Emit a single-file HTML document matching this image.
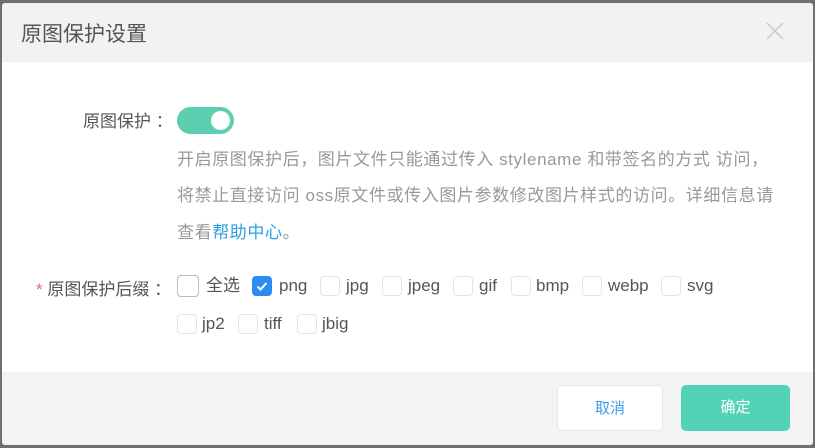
<!DOCTYPE html>
<html><head><meta charset="utf-8"><style>
*{margin:0;padding:0;box-sizing:border-box}
body{width:815px;height:448px;overflow:hidden;background:#6f6f6f;font-family:"Liberation Sans","Noto Sans CJK SC",sans-serif;position:relative}
.dlg{position:absolute;left:2px;top:3px;width:811px;height:442px;background:#fff;border-radius:3px;overflow:hidden}
.hd{position:absolute;left:0;top:0;width:100%;height:59px;background:#f2f2f2}
.hd .t{position:absolute;left:19px;top:15px;font-size:21px;color:#555}
.ft{position:absolute;left:0;top:369px;width:100%;height:73px;background:#f3f3f3}
.a{position:absolute;white-space:nowrap}
.lbl{font-size:17px;color:#555}
.desc{font-size:17px;color:#999;letter-spacing:0.6px}
.cb{position:absolute;width:20px;height:20px;border:1px solid #e4e4e4;border-radius:4px;background:#fff}
.ct{position:absolute;font-size:17px;color:#555;line-height:20px}
.btn{position:absolute;top:382px;height:46px;border-radius:5px;font-size:15px;text-align:center;line-height:46px}
</style></head><body>
<div class="dlg">
<div class="hd"><div class="t">原图保护设置</div>
<svg class="a" style="left:764px;top:19px" width="18" height="18" viewBox="0 0 18 18"><path d="M1 1L17 17M17 1L1 17" stroke="#c4cad2" stroke-width="1.5"/></svg></div>
<div class="a lbl" style="left:81px;top:104px">原图保护 ：</div>
<div class="a" style="left:175px;top:104px;width:57px;height:27px;border-radius:14px;background:#5ccfb0"><div style="position:absolute;right:4px;top:4px;width:19px;height:19px;border-radius:50%;background:#fff"></div></div>
<div class="a desc" style="left:175px;top:142px">开启原图保护后，图片文件只能通过传入 stylename 和带签名的方式 访问，</div>
<div class="a desc" style="left:175px;top:178px">将禁止直接访问 oss原文件或传入图片参数修改图片样式的访问。详细信息请</div>
<div class="a desc" style="left:175px;top:215px">查看<span style="color:#2d9fe6">帮助中心</span>。</div>
<div class="a lbl" style="left:34px;top:272px"><span style="color:#e06a6a">*</span> 原图保护后缀 ：</div>
<div class="cb" style="left:175px;top:272px;width:22px;height:22px;border-color:#bbb"></div><div class="ct" style="left:204px;top:273px">全选</div>
<div class="cb" style="left:250px;top:273px;background:#2d8cf0;border-color:#2d8cf0"><svg width="18" height="18" viewBox="0 0 18 18"><path d="M4.5 9.5L7.5 12.5L13.5 6" stroke="#fff" stroke-width="2" fill="none"/></svg></div><div class="ct" style="left:277px;top:273px">png</div>
<div class="cb" style="left:318px;top:273px"></div><div class="ct" style="left:344px;top:273px">jpg</div>
<div class="cb" style="left:380px;top:273px"></div><div class="ct" style="left:406px;top:273px">jpeg</div>
<div class="cb" style="left:451px;top:273px"></div><div class="ct" style="left:477px;top:273px">gif</div>
<div class="cb" style="left:509px;top:273px"></div><div class="ct" style="left:534px;top:273px">bmp</div>
<div class="cb" style="left:580px;top:273px"></div><div class="ct" style="left:606px;top:273px">webp</div>
<div class="cb" style="left:659px;top:273px"></div><div class="ct" style="left:685px;top:273px">svg</div>
<div class="cb" style="left:175px;top:311px"></div><div class="ct" style="left:200px;top:311px">jp2</div>
<div class="cb" style="left:236px;top:311px"></div><div class="ct" style="left:262px;top:311px">tiff</div>
<div class="cb" style="left:295px;top:311px"></div><div class="ct" style="left:320px;top:311px">jbig</div>
<div class="ft"></div>
<div class="btn" style="left:555px;width:106px;background:#fff;border:1px solid #e6e6e6;color:#3d9be9">取消</div>
<div class="btn" style="left:679px;width:109px;background:#52d3b5;color:#fff">确定</div>
</div>
</body></html>
